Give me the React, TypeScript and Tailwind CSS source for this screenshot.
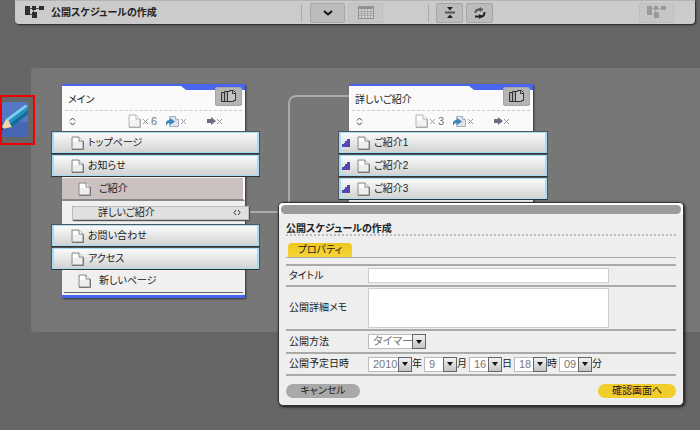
import type { ReactNode } from 'react';

function PageIcon({ className = '' }: { className?: string }) {
  return (
    <svg width="13" height="14" viewBox="0 0 13 14" className={'shrink-0 ' + className} aria-hidden="true">
      <path d="M1 1h7l4 4v8H1z" fill="#eee" stroke="#8a8a8a" />
      <path d="M8 1v4h4" fill="#fff" stroke="#8a8a8a" />
      <path d="M1 13.5h11.5V5" fill="none" stroke="#777" />
      <path d="M2 2h5v4H2z" fill="#fff" />
    </svg>
  );
}

function SiteMapIcon({ color, edge }: { color: string; edge: string }) {
  return (
    <svg width="19" height="13" viewBox="0 0 19 13" aria-hidden="true">
      <path d="M4 2.500h11M8.500 2v8M5 8.500h3" fill="none" stroke={edge} />
      <path d="M0 0h5v9H0zM7 0h4v4H7zM14 0h5v4h-5zM7 6h5v6H7z" fill={color} />
      <path d="M1.500 3h2M1.500 6h2" stroke={edge} strokeWidth="0.500" />
    </svg>
  );
}

function PagesIcon() {
  return (
    <svg width="17" height="13" viewBox="0 0 17 13" aria-hidden="true">
      <path d="M1.500 2.500h3v9h-3zM4.500 1.500h4v10h-4z" fill="#aaa" stroke="#333" />
      <path d="M7.500 1.500h2v-1h4l2 2v8h-2v1h-6z" fill="#c4c4c4" stroke="#333" />
      <path d="M12.500 1v2.500h3" fill="none" stroke="#333" />
    </svg>
  );
}

function Sorter() {
  return (
    <svg width="7" height="9" viewBox="0 0 7 9" aria-hidden="true">
      <path d="M1 3.500L3.500 1 6 3.500M1 5.500L3.500 8 6 5.500" fill="none" stroke="#444" />
    </svg>
  );
}

function Cross() {
  return (
    <svg width="7" height="7" viewBox="0 0 7 7" aria-hidden="true">
      <path d="M1 1l5 5M6 1L1 6" stroke="#999" />
    </svg>
  );
}

function LinkPageIcon() {
  return (
    <svg width="14" height="13" viewBox="0 0 14 13" aria-hidden="true">
      <path d="M3.500 1.500h6l3 3v7h-9z" fill="#dfe3ea" stroke="#aab0bb" />
      <path d="M9.500 1.500v3h3" fill="#fff" stroke="#aab0bb" />
      <path d="M0 11V8q0-3 4-3V3l5 3.500-5 3.500V8Q1 8 0 11z" fill="#3c86b8" />
    </svg>
  );
}

function ForwardIcon() {
  return (
    <svg width="9" height="8" viewBox="0 0 9 8" aria-hidden="true">
      <path d="M0 2h4V0l5 4-5 4V6H0z" fill="#716a85" />
    </svg>
  );
}

function StepsIcon() {
  return (
    <svg width="8" height="8" viewBox="0 0 8 8" aria-hidden="true">
      <path d="M0 8V5h2V4h1V2h2V0h3v8z" fill="#5a44ad" />
    </svg>
  );
}

function CardHeader({ title, count }: { title: string; count: number }) {
  return (
    <header className="relative h-[47px] border-t-2 border-[#4a66ee] bg-[#fafafa] px-[3px] text-[#222]">
      <svg className="absolute right-0 top-0" width="64" height="4" viewBox="0 0 64 4" aria-hidden="true">
        <path d="M0 0h64v4H5z" fill="#4a66ee" />
      </svg>
      <button
        type="button"
        aria-label={title + ' 複製'}
        className="absolute right-[3px] top-px flex h-[19px] w-[27px] items-center justify-center rounded-xs border border-[#a4a4a4] bg-[#b5b5b5]"
      >
        <PagesIcon />
      </button>
      <h2 className="flex h-[25px] items-center border-b border-dashed border-[#ccc] pl-[3px] pt-1">{title}</h2>
      <div className="flex h-5 items-center pl-1">
        <Sorter />
        <div className="ml-[52px] flex w-[38px] items-center gap-px text-[#777]">
          <PageIcon className="opacity-60" />
          <Cross />
          <span className="ml-px text-[11px]">{count}</span>
        </div>
        <div className="flex w-[41px] items-center"><LinkPageIcon /><Cross /></div>
        <div className="flex items-center"><ForwardIcon /><Cross /></div>
      </div>
    </header>
  );
}

function WideRow({ label, steps = false }: { label: string; steps?: boolean }) {
  return (
    <li className="-ml-[11px] -mr-[15px] h-[23px] border border-[#555] border-b-[#333]">
      <button
        type="button"
        className={
          'flex h-full w-full items-center border border-x-2 border-[#a5dcf8] bg-linear-to-b from-[#fafafa] to-[#d3d3d3] ' +
          (steps ? 'pl-px' : 'pl-[17px]')
        }
      >
        {steps && <span className="mr-[7px]"><StepsIcon /></span>}
        <PageIcon className="mr-1" />
        {label}
      </button>
    </li>
  );
}

function Sep({ className = '' }: { className?: string }) {
  return <span className={'h-[18px] w-px bg-[#aaa] ' + className} />;
}

function ToolButton({ label, size, dim = false, children }: { label: string; size: string; dim?: boolean; children: ReactNode }) {
  return (
    <button
      type="button"
      aria-label={label}
      className={
        'flex h-5 items-center justify-center rounded-xs border ' + size + ' ' +
        (dim ? 'border-[#bfbfbf] bg-[#c6c6c6]' : 'border-[#a6a6a6] bg-[#bcbcbc]')
      }
    >
      {children}
    </button>
  );
}

function Toolbar() {
  return (
    <header className="ml-[15px] mr-[5px] flex h-6 items-center rounded-b-[4px] border-t border-[#b4b4b4] bg-[#cbcbcb] pr-[21px] shadow-[1px_1px_2px_#222]">
      <div className="flex flex-1 items-center gap-[7px] pl-[10px]">
        <SiteMapIcon color="#2d2d2d" edge="#555" />
        <h1 className="font-bold text-[#222]">公開スケジュールの作成</h1>
      </div>
      <Sep />
      <div className="ml-2 flex w-[118px] gap-[3px]">
        <ToolButton label="開く" size="w-[35px]">
          <svg width="10" height="6" viewBox="0 0 10 6" aria-hidden="true">
            <path d="M1 1l4 3.500L9 1" fill="none" stroke="#111" strokeWidth="2" />
          </svg>
        </ToolButton>
        <ToolButton label="カレンダー" size="w-[35px]" dim>
          <svg width="16" height="13" viewBox="0 0 16 13" aria-hidden="true">
            <path d="M0 0h16v13H0z" fill="#929292" />
            <path d="M1 3h14v9H1z" fill="#d0d0d0" />
            <path d="M3.500 3v9M6.500 3v9M9.500 3v9M12.500 3v9M1 5.500h14M1 7.500h14M1 9.500h14" stroke="#aaa" />
          </svg>
        </ToolButton>
      </div>
      <Sep />
      <div className="ml-[7px] flex w-[203px] gap-[3px]">
        <ToolButton label="折りたたむ" size="w-[27px]">
          <svg width="10" height="11" viewBox="0 0 10 11" aria-hidden="true">
            <path d="M2 0h6L5 3.500zM2 11h6L5 7.500z" fill="#222" />
            <path d="M0 5.500h10" stroke="#555" strokeWidth="2" />
          </svg>
        </ToolButton>
        <ToolButton label="更新" size="w-[27px]">
          <svg width="12" height="12" viewBox="0 0 12 12" aria-hidden="true">
            <path d="M9 2.500H5Q1.500 2.500 1.500 6" fill="none" stroke="#555" strokeWidth="2" />
            <path d="M7 0v5L3.500 2.500z" fill="#555" />
            <path d="M1 9.500h6Q10.500 9.500 10.500 5" fill="none" stroke="#222" strokeWidth="2" />
            <path d="M5 7v5l4-2.500z" fill="#222" />
          </svg>
        </ToolButton>
      </div>
      <ToolButton label="サイトマップ" size="w-[35px]" dim>
        <SiteMapIcon color="#999" edge="#aaa" />
      </ToolButton>
    </header>
  );
}

function Pick({ id, label, value, size }: { id: string; label: string; value: string; size: string }) {
  return (
    <span className={'relative h-[15px] ' + size}>
      <select
        id={id}
        aria-label={label}
        defaultValue={value}
        className="block h-[15px] w-full appearance-none border border-[#bbb] bg-white pl-1 text-[11px] leading-[13px] text-[#777]"
      >
        <option>{value}</option>
      </select>
      <span className="pointer-events-none absolute right-0 top-0 flex h-[15px] w-[14px] items-center justify-center border border-[#666] bg-linear-to-b from-[#f2f2f2] to-[#c4c4c4]">
        <svg width="6" height="4" viewBox="0 0 6 4" aria-hidden="true"><path d="M0 0h6L3 4z" fill="#111" /></svg>
      </span>
    </span>
  );
}

function Field({ id, label, size, children }: { id: string; label: string; size: string; children: ReactNode }) {
  return (
    <div className={'flex items-center border-b-2 border-[#aaa] ' + size}>
      <label htmlFor={id} className="w-[82px] shrink-0 pl-[3px]">{label}</label>
      {children}
    </div>
  );
}

const dateParts = [
  { id: 'year', value: '2010', unit: '年', size: 'w-11' },
  { id: 'month', value: '9', unit: '月', size: 'w-[33px]' },
  { id: 'day', value: '16', unit: '日', size: 'w-[33px]' },
  { id: 'hour', value: '18', unit: '時', size: 'w-[33px]' },
  { id: 'minute', value: '09', unit: '分', size: 'w-[33px]' },
];

function ScheduleDialog() {
  return (
    <form
      role="dialog"
      aria-labelledby="dialog-title"
      onSubmit={(e) => e.preventDefault()}
      className="absolute left-[278px] top-[202px] w-[406px] rounded-[5px] border border-[#333] bg-[#eee] pb-[7px] shadow-[1px_1px_3px_#111]"
    >
      <div className="rounded-t-[4px] border-2 border-b-0 border-white">
        <div className="h-[9px] rounded-full bg-[#9b9b9b]" />
      </div>
      <div className="px-[7px]">
        <h2 id="dialog-title" className="flex h-[22px] items-end border-b-2 border-dotted border-[#bbb] font-bold leading-[11px] text-[#222]">
          公開スケジュールの作成
        </h2>
        <div role="tablist" className="flex h-[22px] items-end border-b border-[#aaa] pl-[2px]">
          <button type="button" role="tab" aria-selected="true" className="h-[14px] w-16 rounded-t-[4px] bg-linear-to-b from-[#eec71c] to-[#f5d637] leading-[14px]">
            プロパティ
          </button>
        </div>
        <div className="mt-[6px] border-t-2 border-[#aaa]">
          <Field id="title" label="タイトル" size="h-[21px]">
            <input id="title" type="text" className="h-[15px] w-[241px] border border-[#ccc] bg-white px-1" />
          </Field>
          <Field id="memo" label="公開詳細メモ" size="h-11">
            <textarea id="memo" className="h-10 w-[241px] resize-none border border-[#ccc] bg-white px-1" />
          </Field>
          <Field id="method" label="公開方法" size="h-[23px]">
            <Pick id="method" label="公開方法" value="タイマー" size="w-[58px]" />
          </Field>
          <Field id="year" label="公開予定日時" size="h-[22px]">
            {dateParts.map((p) => (
              <span key={p.id} className="flex items-center">
                <Pick id={p.id} label={p.unit} value={p.value} size={p.size} />
                <span className="w-3">{p.unit}</span>
              </span>
            ))}
          </Field>
        </div>
        <div className="mt-2 flex justify-between">
          <button type="button" className="h-[14px] w-[74px] rounded-full bg-[#a9a9a9] leading-[14px]">キャンセル</button>
          <button type="submit" className="h-[14px] w-[78px] rounded-full bg-[#f1ce2b] leading-[14px]">確認画面へ</button>
        </div>
      </div>
    </form>
  );
}

export default function App() {
  return (
    <div className="relative min-h-screen overflow-hidden bg-[#666] font-['Liberation_Sans','Noto_Sans_CJK_JP',sans-serif] text-[10px] leading-[14px] text-[#222] [font-feature-settings:'palt']">
      <Toolbar />
      <main className="relative ml-[31px] mt-11 h-[264px] rounded-l-[4px] bg-[#777]">
        <svg className="absolute left-[217px] top-[26px]" width="102" height="122" viewBox="0 0 102 122" aria-hidden="true">
          <path d="M0 118h41M41 118V10q0-8 8-8H102" fill="none" stroke="#aaa" strokeWidth="2" />
        </svg>
        <section className="absolute left-[31px] top-4 w-[183px] bg-[#f0f0f0] shadow-[1px_1px_2px_#333]">
          <CardHeader title="メイン" count={6} />
          <ul>
            <WideRow label="トップページ" />
            <WideRow label="お知らせ" />
            <li className="mt-px flex h-[23px] items-center border-b-2 border-r-2 border-b-[#888] border-r-white bg-[#cbc1c0] pl-4">
              <PageIcon className="mr-2" />ご紹介
            </li>
            <li className="flex h-[23px] items-center">
              <button type="button" className="-mr-1 ml-[10px] flex h-[14px] flex-1 items-center justify-between border border-[#bbb] bg-[#e0e0e0] pl-[25px] pr-[7px] shadow-[1px_1px_1px_#555]">
                詳しいご紹介
                <svg width="8" height="7" viewBox="0 0 8 7" aria-hidden="true">
                  <path d="M3 1L1 3.500 3 6M5 1l2 2.500L5 6" fill="none" stroke="#333" />
                </svg>
              </button>
            </li>
            <WideRow label="お問い合わせ" />
            <WideRow label="アクセス" />
            <li className="mx-[2px] flex h-[23px] items-center border-b border-[#666] pl-[14px]">
              <PageIcon className="mr-2" />新しいページ
            </li>
          </ul>
          <div className="mt-[2px] h-[3px] bg-[#4a66ee]" />
        </section>
        <section className="absolute left-[318px] top-4 w-[184px] bg-[#f0f0f0] pb-5 shadow-[1px_1px_2px_#333]">
          <CardHeader title="詳しいご紹介" count={3} />
          <ul>
            <WideRow label="ご紹介1" steps />
            <WideRow label="ご紹介2" steps />
            <WideRow label="ご紹介3" steps />
          </ul>
        </section>
      </main>
      <button
        type="button"
        aria-label="編集"
        className="absolute left-0 top-[95px] flex h-[50px] w-[35px] items-center border-2 border-[#f00000] bg-[#666]"
      >
        <svg width="27" height="36" viewBox="0 0 27 36" aria-hidden="true">
          <path d="M0 0h23q3 0 3 3v29q0 3-3 3H0z" fill="#5478c4" />
          <path d="M0 20h26v12q0 3-3 3H0z" fill="#4668b4" />
          <path d="M4 17L23 3l3 1v8L10 25z" fill="#258fc0" />
          <path d="M4 17L23 3l3 1L6 19z" fill="#7fd0ee" />
          <path d="M10 25l16-13V8L8 22z" fill="#156b98" />
          <path d="M4 17l3 2 1 3 2 3-10 2v-2z" fill="#ecd9a6" />
          <path d="M0 28v-3l2 2z" fill="#333" />
        </svg>
      </button>
      <ScheduleDialog />
    </div>
  );
}
